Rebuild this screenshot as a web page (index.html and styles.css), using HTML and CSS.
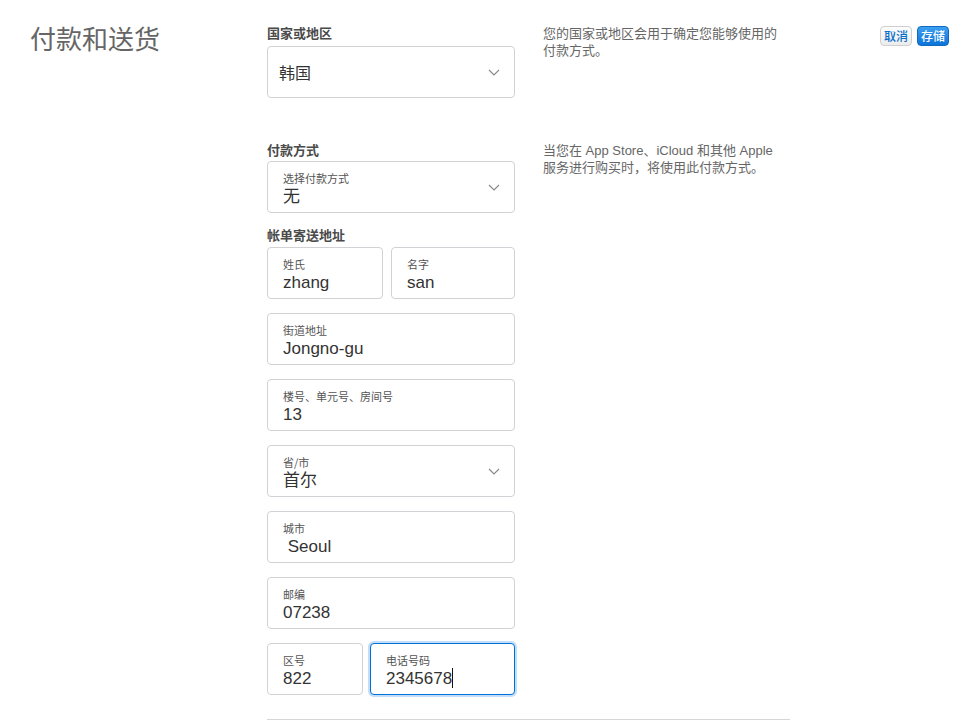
FILE: index.html
```html
<!DOCTYPE html>
<html lang="zh-CN">
<head>
<meta charset="utf-8">
<title>付款和送货</title>
<link rel="stylesheet" href="styles.css">
</head>
<body>
<div class="page">
  <h1 class="title">付款和送货</h1>
  <div class="content">
    <section class="section">
      <div class="form-col">
        <div class="group-label">国家或地区</div>
        <div class="field select single">
          <span class="value">韩国</span>
          <svg class="chev" width="12" height="7" viewBox="0 0 12 7"><path d="M1 1l5 5 5-5" fill="none" stroke="#8a8a8a" stroke-width="1.2"/></svg>
        </div>
      </div>
      <p class="desc">您的国家或地区会用于确定您能够使用的付款方式。</p>
    </section>

    <section class="section second">
      <div class="form-col">
        <div class="group-label pay">付款方式</div>
        <div class="field select">
          <div class="stack">
            <span class="label">选择付款方式</span>
            <span class="value">无</span>
          </div>
          <svg class="chev" width="12" height="7" viewBox="0 0 12 7"><path d="M1 1l5 5 5-5" fill="none" stroke="#8a8a8a" stroke-width="1.2"/></svg>
        </div>

        <div class="group-label billing">帐单寄送地址</div>
        <div class="rows">
          <div class="row">
            <div class="field w-last"><div class="stack"><span class="label">姓氏</span><span class="value">zhang</span></div></div>
            <div class="field grow"><div class="stack"><span class="label">名字</span><span class="value">san</span></div></div>
          </div>
          <div class="field"><div class="stack"><span class="label">街道地址</span><span class="value">Jongno-gu</span></div></div>
          <div class="field"><div class="stack"><span class="label">楼号、单元号、房间号</span><span class="value">13</span></div></div>
          <div class="field select">
            <div class="stack"><span class="label">省/市</span><span class="value">首尔</span></div>
            <svg class="chev" width="12" height="7" viewBox="0 0 12 7"><path d="M1 1l5 5 5-5" fill="none" stroke="#8a8a8a" stroke-width="1.2"/></svg>
          </div>
          <div class="field"><div class="stack"><span class="label">城市</span><span class="value">&nbsp;Seoul</span></div></div>
          <div class="field"><div class="stack"><span class="label">邮编</span><span class="value">07238</span></div></div>
          <div class="row tight">
            <div class="field w-area"><div class="stack"><span class="label">区号</span><span class="value">822</span></div></div>
            <div class="field grow focus"><div class="stack"><span class="label">电话号码</span><span class="value">2345678<span class="caret"></span></span></div></div>
          </div>
        </div>
      </div>
      <p class="desc">当您在 App Store、iCloud 和其他 Apple 服务进行购买时，将使用此付款方式。</p>
    </section>
    <div class="footer-line"></div>
  </div>
  <div class="actions">
    <button class="btn btn-cancel">取消</button>
    <button class="btn btn-save">存储</button>
  </div>
</div>
</body>
</html>
```

FILE: styles.css
```css
html, body {
  margin: 0;
  padding: 0;
  background: #fff;
}
body {
  font-family: "Liberation Sans", "Noto Sans CJK SC", sans-serif;
  color: #333;
}
.page {
  display: grid;
  grid-template-columns: 237px 523px 1fr;
  padding: 24px 26px 0 30px;
  align-items: start;
}
.title {
  margin: 0;
  font-family: "Noto Sans CJK SC", sans-serif;
  font-weight: 400;
  font-size: 26px;
  line-height: 36px;
  margin-top: -4px;
  color: #666;
}
.content {
  display: flex;
  flex-direction: column;
}
.section {
  display: flex;
  gap: 28px;
  align-items: flex-start;
}
.section.second {
  margin-top: 43px;
}
.form-col {
  width: 248px;
  flex: none;
}
.group-label {
  font-family: "Noto Sans CJK SC", sans-serif;
  font-size: 13px;
  font-weight: 700;
  line-height: 18px;
  color: #4a4a4a;
  margin-bottom: 4px;
}
.group-label.pay {
  margin-bottom: 2px;
}
.group-label.billing {
  margin-top: 13px;
  margin-bottom: 3px;
}
.desc {
  margin: 0;
  width: 246px;
  font-family: "Liberation Sans", "Noto Sans CJK SC", sans-serif;
  font-size: 13px;
  line-height: 17px;
  color: #666;
  padding-top: 1px;
}
.rows {
  display: flex;
  flex-direction: column;
  gap: 14px;
}
.row {
  display: flex;
  gap: 8px;
}
.row.tight {
  gap: 7px;
}
.field {
  box-sizing: border-box;
  height: 52px;
  border: 1px solid #d2d2d6;
  border-radius: 4px;
  padding: 9px 15px 5px;
  display: flex;
  align-items: center;
  background: #fff;
}
.field.w-last { width: 116px; flex: none; }
.field.w-area { width: 96px; flex: none; }
.field.grow { flex: 1; }
.field.focus {
  border-color: #0071d0;
  box-shadow: 0 0 0 2px rgba(80, 160, 240, 0.35);
}
.field.single {
  padding: 7px 15px 7px 11px;
}
.stack {
  display: flex;
  flex-direction: column;
  flex: 1;
  min-width: 0;
}
.label {
  font-family: "Noto Sans CJK SC", sans-serif;
  font-size: 11px;
  line-height: 14px;
  color: #555;
}
.value {
  font-size: 17px;
  line-height: 23px;
  color: #333;
  white-space: nowrap;
}
.single .value {
  flex: 1;
  font-family: "Noto Sans CJK SC", sans-serif;
  font-size: 16px;
}
.select .chev {
  flex: none;
  margin-right: -1px;
  margin-left: 8px;
}
.select:not(.single) .chev {
  margin-top: -4px;
}
.caret {
  display: inline-block;
  width: 1px;
  height: 20px;
  background: #111;
  vertical-align: -4px;
}
.footer-line {
  margin-top: 24px;
  border-top: 1px solid #d6d6d6;
  height: 0;
}
.actions {
  display: flex;
  justify-content: flex-end;
  gap: 5px;
  margin-top: 2px;
}
.btn {
  box-sizing: border-box;
  height: 20px;
  width: 32px;
  padding: 0;
  border-radius: 4px;
  font-family: "Noto Sans CJK SC", sans-serif;
  font-size: 12px;
  font-weight: 500;
  line-height: 18px;
  cursor: pointer;
}
.btn-cancel {
  background: linear-gradient(#fdfdfd, #ececec);
  border: 1px solid #cfcfcf;
  color: #0a6fc8;
}
.btn-save {
  background: linear-gradient(#3d9ff0, #0c73d8);
  border: 1px solid #0d6cc2;
  color: #fff;
}
```
